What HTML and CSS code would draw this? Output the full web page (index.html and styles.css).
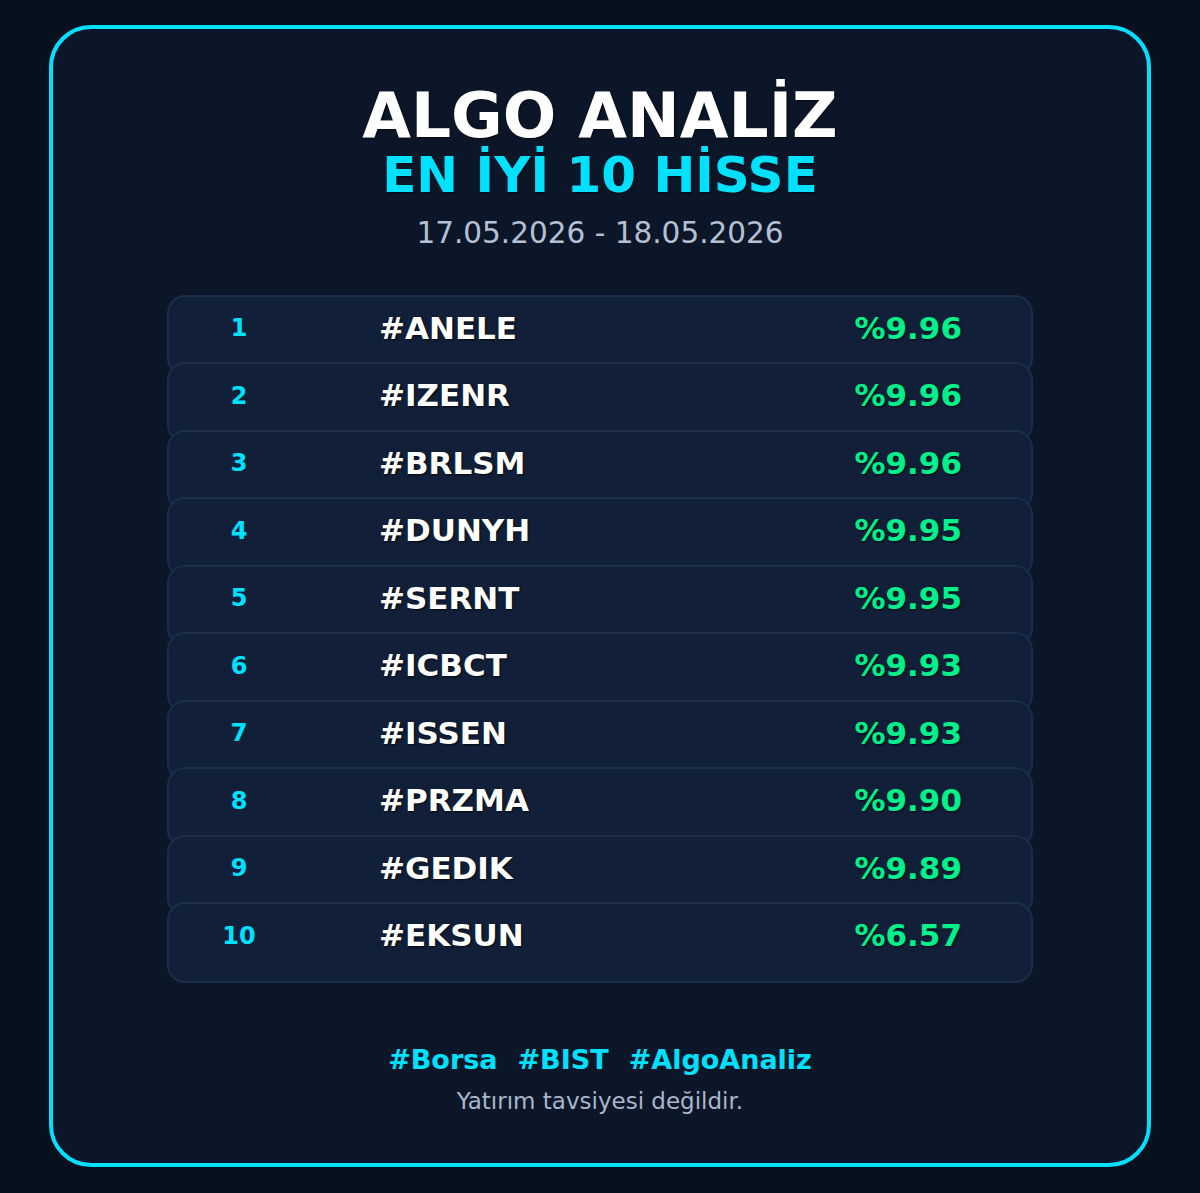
FILE: index.html
```html
<!DOCTYPE html>
<html lang="tr">
<head>
<meta charset="utf-8">
<title>Algo Analiz</title>
<link rel="stylesheet" href="styles.css">
</head>
<body>
<div class="frame">
  <h1 class="title">ALGO ANALİZ</h1>
  <h2 class="subtitle">EN İYİ 10 HİSSE</h2>
  <div class="date">17.05.2026 - 18.05.2026</div>
  <div class="list">
    <div class="row"><span class="rank">1</span><span class="ticker">#ANELE</span><span class="pct">%9.96</span></div>
    <div class="row"><span class="rank">2</span><span class="ticker">#IZENR</span><span class="pct">%9.96</span></div>
    <div class="row"><span class="rank">3</span><span class="ticker">#BRLSM</span><span class="pct">%9.96</span></div>
    <div class="row"><span class="rank">4</span><span class="ticker">#DUNYH</span><span class="pct">%9.95</span></div>
    <div class="row"><span class="rank">5</span><span class="ticker">#SERNT</span><span class="pct">%9.95</span></div>
    <div class="row"><span class="rank">6</span><span class="ticker">#ICBCT</span><span class="pct">%9.93</span></div>
    <div class="row"><span class="rank">7</span><span class="ticker">#ISSEN</span><span class="pct">%9.93</span></div>
    <div class="row"><span class="rank">8</span><span class="ticker">#PRZMA</span><span class="pct">%9.90</span></div>
    <div class="row"><span class="rank">9</span><span class="ticker">#GEDIK</span><span class="pct">%9.89</span></div>
    <div class="row"><span class="rank">10</span><span class="ticker">#EKSUN</span><span class="pct">%6.57</span></div>
  </div>
  <div class="tags"><span>#Borsa</span><span>#BIST</span><span>#AlgoAnaliz</span></div>
  <div class="note">Yatırım tavsiyesi değildir.</div>
</div>
</body>
</html>
```

FILE: styles.css
```css
* { box-sizing: border-box; }
html, body { margin: 0; padding: 0; }
body {
  background: #07101e;
  font-family: "DejaVu Sans", "Liberation Sans", sans-serif;
  width: 1200px;
  height: 1193px;
  padding-top: 25px;
}
.frame {
  width: 1102px;
  height: 1142px;
  margin: 0 auto;
  border: 4px solid #00e1ff;
  border-radius: 42px;
  background: #0c1629;
  display: flex;
  flex-direction: column;
  align-items: center;
  padding-top: 55px;
}
.title {
  margin: 0;
  font-size: 63px;
  line-height: 1;
  font-weight: bold;
  color: #ffffff;
  text-shadow: 1px 1px 2px rgba(0,0,0,0.6);
}
.subtitle {
  margin: 3px 0 0;
  font-size: 50px;
  line-height: 1;
  font-weight: bold;
  color: #00e1ff;
  text-shadow: 1px 1px 2px rgba(0,0,0,0.6);
}
.date {
  margin-top: 19px;
  font-size: 29.5px;
  line-height: 1;
  color: #b4c0d3;
}
.list {
  margin-top: 46px;
  width: 866px;
  display: flex;
  flex-direction: column;
}
.row {
  height: 81px;
  margin-bottom: -13.5px;
  padding-bottom: 13.5px;
  border: 2px solid #1a2d4c;
  border-radius: 18px;
  background: #111f38;
  display: grid;
  grid-template-columns: 140px 1fr auto;
  align-items: center;
  padding-right: 69px;
}
.row:last-child { margin-bottom: 0; }
.rank {
  text-align: center;
  font-size: 24px;
  font-weight: bold;
  color: #00e1ff;
  line-height: 1;
}
.ticker {
  padding-left: 70px;
  font-size: 31px;
  font-weight: bold;
  color: #ffffff;
  line-height: 1;
  text-shadow: 1px 1px 2px rgba(0,0,0,0.7);
}
.pct {
  font-size: 31px;
  font-weight: bold;
  color: #00f08c;
  line-height: 1;
  text-shadow: 1px 1px 2px rgba(0,0,0,0.7);
}
.tags {
  margin-top: 63px;
  display: flex;
  gap: 20px;
  font-size: 27px;
  line-height: 1;
  font-weight: bold;
  color: #00e1ff;
}
.note {
  margin-top: 17px;
  font-size: 23px;
  line-height: 1;
  color: #a9b6c9;
}
```
